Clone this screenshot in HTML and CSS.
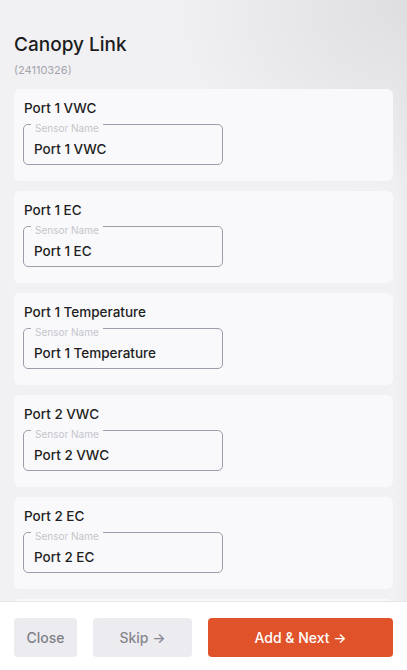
FILE: index.html
```html
<!DOCTYPE html>
<html lang="en">
<head>
<meta charset="utf-8">
<title>Canopy Link</title>
<link rel="stylesheet" href="styles.css">
</head>
<body>
<div class="screen">
  <main class="content">
    <header class="head">
      <h1 class="title">Canopy Link</h1>
      <div class="serial">(24110326)</div>
    </header>
    <div class="list">
      <section class="card">
        <div class="card-label">Port 1 VWC</div>
        <div class="field"><span class="legend">Sensor Name</span><div class="value">Port 1 VWC</div></div>
      </section>
      <section class="card">
        <div class="card-label">Port 1 EC</div>
        <div class="field"><span class="legend">Sensor Name</span><div class="value">Port 1 EC</div></div>
      </section>
      <section class="card">
        <div class="card-label">Port 1 Temperature</div>
        <div class="field"><span class="legend">Sensor Name</span><div class="value">Port 1 Temperature</div></div>
      </section>
      <section class="card">
        <div class="card-label">Port 2 VWC</div>
        <div class="field"><span class="legend">Sensor Name</span><div class="value">Port 2 VWC</div></div>
      </section>
      <section class="card">
        <div class="card-label">Port 2 EC</div>
        <div class="field"><span class="legend">Sensor Name</span><div class="value">Port 2 EC</div></div>
      </section>
      <section class="card card-peek"></section>
    </div>
  </main>
  <footer class="actions">
    <button class="btn btn-close">Close</button>
    <button class="btn btn-skip">Skip →</button>
    <button class="btn btn-add">Add &amp; Next →</button>
  </footer>
</div>
</body>
</html>
```
FILE: styles.css
```css
* { box-sizing: border-box; }
html, body { margin: 0; padding: 0; }
body {
  font-family: "Inter", "Noto Sans", sans-serif;
  color: #1e1e22;
  background: #f1f1f4;
}
.screen {
  height: 100vh;
  display: flex;
  flex-direction: column;
  background:
    radial-gradient(ellipse 240px 200px at 100% 0%, #dedee1 0%, rgba(241,241,244,0) 100%),
    linear-gradient(to left, #ebebee 0px, rgba(241,241,244,0) 12px),
    #f1f1f4;
}
.content {
  flex: 1;
  overflow: hidden;
  padding: 0 14px;
}
.head { padding-top: 32px; }
.title {
  margin: 0;
  font-size: 19px;
  line-height: 25px;
  font-weight: 500;
  color: #1c1c20;
}
.serial {
  margin-top: 6px;
  font-size: 11px;
  line-height: 14px;
  color: #a4a4ac;
}
.list {
  margin-top: 12px;
  display: flex;
  flex-direction: column;
  gap: 10px;
}
.card {
  background: #f9f9fb;
  border-radius: 6px;
  padding: 11px 10px 16px 9px;
  height: 92px;
  flex: none;
}
.card-label {
  font-size: 13.5px;
  line-height: 16px;
  font-weight: 500;
  color: #1e1e22;
  padding-left: 1px;
}
.field {
  position: relative;
  margin-top: 8px;
  width: 200px;
  height: 41px;
  border: 1.5px solid #9a9eaa;
  border-radius: 5px;
}
.legend {
  position: absolute;
  top: -3px;
  left: 7px;
  padding: 0 4px;
  font-size: 10px;
  line-height: 12px;
  color: #c4c5cc;
  background: #f9f9fb;
}
.value {
  padding: 15px 0 0 10px;
  font-size: 13.5px;
  line-height: 18px;
  font-weight: 500;
  color: #1e1e22;
}
.actions {
  flex: none;
  height: 69px;
  background: #ffffff;
  border-top: 1px solid #e6e6ea;
  display: flex;
  gap: 16px;
  padding: 16px 14px 0 14px;
}
.btn {
  height: 39px;
  border: none;
  border-radius: 4px;
  font-family: "Inter", "Noto Sans", sans-serif;
  font-size: 14px;
  font-weight: 500;
  padding: 0;
}
.btn-close {
  width: 63px;
  background: #ececf0;
  color: #808088;
}
.btn-skip {
  width: 99px;
  background: #ececf0;
  color: #86868e;
}
.btn-add {
  flex: 1;
  background: #e0522a;
  color: #ffffff;
}
```
